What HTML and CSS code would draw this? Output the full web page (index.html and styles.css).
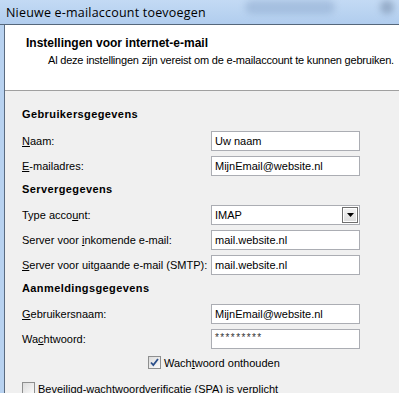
FILE: index.html
```html
<!DOCTYPE html>
<html>
<head>
<meta charset="utf-8">
<link rel="stylesheet" href="styles.css">
</head>
<body>
<div class="titlebar">
  <span class="title">Nieuwe e-mailaccount toevoegen</span>
  <span class="blur b1"></span>
  <span class="blur b2"></span>
</div>
<div class="frame">
  <div class="window">
    <div class="header">
      <div class="h-title">Instellingen voor internet-e-mail</div>
      <div class="h-sub">Al deze instellingen zijn vereist om de e-mailaccount te kunnen gebruiken.</div>
    </div>
    <div class="body">
      <div class="section">Gebruikersgegevens</div>
      <div class="form">
        <label class="lbl"><u>N</u>aam:</label>
        <div class="field">Uw naam</div>
        <label class="lbl"><u>E</u>-mailadres:</label>
        <div class="field">MijnEmail@website.nl</div>
      </div>
      <div class="section">Servergegevens</div>
      <div class="form">
        <label class="lbl">Type acco<u>u</u>nt:</label>
        <div class="field select"><span>IMAP</span><span class="arrow"><svg width="7" height="4" viewBox="0 0 7 4"><path d="M0 0h7L3.5 4z" fill="#000"/></svg></span></div>
        <label class="lbl">Server voor <u>i</u>nkomende e-mail:</label>
        <div class="field">mail.website.nl</div>
        <label class="lbl"><u>S</u>erver voor uitgaande e-mail (SMTP):</label>
        <div class="field">mail.website.nl</div>
      </div>
      <div class="section">Aanmeldingsgegevens</div>
      <div class="form">
        <label class="lbl"><u>G</u>ebruikersnaam:</label>
        <div class="field">MijnEmail@website.nl</div>
        <label class="lbl">Wa<u>c</u>htwoord:</label>
        <div class="field pw">*********</div>
      </div>
      <div class="remember">
        <span class="cb checked"><svg width="9" height="9" viewBox="0 0 9 9"><path d="M1 4.5l2.3 2.5L8 1" fill="none" stroke="#2b4f8a" stroke-width="1.8"/></svg></span>
        <span>Wach<u>t</u>woord onthouden</span>
      </div>
      <div class="spa">
        <span class="cb"></span>
        <span>Beveiligd-wachtwoordverificatie (SPA) is verplicht</span>
      </div>
    </div>
  </div>
</div>
</body>
</html>
```
FILE: styles.css
```css
html, body {
  margin: 0;
  padding: 0;
  width: 399px;
  height: 393px;
  overflow: hidden;
  background: #b8d2f0;
  font-family: "Liberation Sans", Arial, sans-serif;
  font-size: 11px;
  color: #000;
}
.titlebar {
  position: relative;
  height: 25px;
  background: linear-gradient(#c3daf4, #b1cdee);
  border-bottom: 1px solid #55677b;
  box-sizing: border-box;
}
.title {
  position: absolute;
  left: 6px;
  top: 4px;
  font-family: "Open Sans", "Liberation Sans", sans-serif;
  font-size: 12.5px;
  letter-spacing: 0.2px;
  color: #000;
  white-space: nowrap;
}
.blur {
  position: absolute;
  top: 0;
  height: 14px;
  border-radius: 7px;
  filter: blur(3px);
  background: rgba(120, 150, 190, 0.35);
}
.b1 { left: 245px; width: 90px; }
.b2 { left: 380px; width: 14px; background: rgba(90, 110, 140, 0.4); }
.frame {
  padding-left: 4px;
  height: 368px;
}
.window {
  border-left: 1px solid #5a6b80;
  height: 100%;
  background: #f0f0f0;
  box-sizing: border-box;
}
.header {
  background: #fff;
  height: 66px;
  border-bottom: 1px solid #a0a0a0;
  padding-top: 11px;
  padding-left: 21px;
  box-sizing: border-box;
}
.h-title {
  font-weight: bold;
  font-size: 12px;
  line-height: 15px;
}
.h-sub {
  padding-left: 22px;
  line-height: 15px;
  margin-top: 2px;
  white-space: nowrap;
  letter-spacing: -0.2px;
}
.body {
  padding-left: 17px;
  padding-top: 16px;
}
.section {
  font-weight: bold;
  line-height: 15px;
  height: 15px;
  letter-spacing: 0.4px;
}
.form {
  display: grid;
  grid-template-columns: 189px 149px;
  row-gap: 5px;
  margin-top: 8px;
  margin-bottom: 6px;
  align-items: center;
}
.body > .section:first-child + .form { margin-top: 9px; }
.lbl {
  white-space: nowrap;
  line-height: 15px;
}
u { text-decoration-thickness: 1px; text-underline-offset: 1px; }
.field {
  height: 20px;
  box-sizing: border-box;
  border: 1px solid #abadb3;
  background: #fff;
  padding-left: 3px;
  line-height: 18px;
  font-family: "Liberation Sans", Arial, sans-serif;
  font-size: 11px;
  color: #000;
}
.select {
  display: flex;
  justify-content: space-between;
  align-items: center;
  padding-right: 1px;
}
.arrow {
  width: 16px;
  height: 16px;
  box-sizing: border-box;
  border: 1px solid #6f6f6f;
  background: linear-gradient(#f4f4f4, #dcdcdc);
  box-shadow: inset 0 0 0 1px #fff;
  display: flex;
  align-items: center;
  justify-content: center;
}
.pw { font-size: 10px; letter-spacing: 1.4px; color: #333; line-height: 16px; }
.remember {
  display: flex;
  align-items: center;
  gap: 3px;
  margin-left: 126px;
  margin-top: 4px;
  height: 15px;
}
.cb {
  width: 13px;
  height: 13px;
  box-sizing: border-box;
  border: 1px solid #8e8f8f;
  background: linear-gradient(135deg, #dcdcdc, #fbfbfb);
  display: inline-flex;
  align-items: center;
  justify-content: center;
}
.spa {
  display: flex;
  align-items: center;
  gap: 3px;
  margin-top: 11px;
  height: 15px;
}
```
